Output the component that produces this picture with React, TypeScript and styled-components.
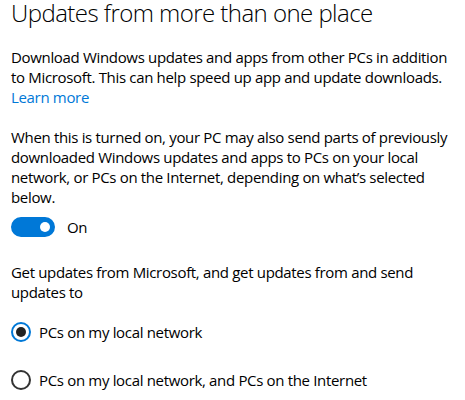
import * as React from "react";
import styled, { createGlobalStyle } from "styled-components";

const GlobalStyle = createGlobalStyle`
  html, body {
    margin: 0;
    padding: 0;
    background: #ffffff;
  }
`;

const Page = styled.div`
  padding: 0 11px;
  font-family: "Open Sans", "Noto Sans", sans-serif;
  color: #000000;
  font-size: 15px;
  line-height: 20px;
  letter-spacing: -0.33px;
`;

const Title = styled.h1`
  margin: 0;
  font-size: 24px;
  font-weight: 300;
  line-height: 26px;
  letter-spacing: -0.55px;
  color: #000000;
`;

const Paragraph = styled.p<{ $top: number }>`
  margin: ${(p) => p.$top}px 0 0;
`;

const Link = styled.a`
  color: #0078d7;
  text-decoration: none;
`;

const ToggleRow = styled.div`
  display: flex;
  align-items: center;
  gap: 12px;
  margin-top: 10px;
`;

const Track = styled.div<{ $on: boolean }>`
  width: 44px;
  height: 20px;
  border-radius: 10px;
  box-sizing: border-box;
  background: ${(p) => (p.$on ? "#0078d7" : "transparent")};
  border: 2px solid ${(p) => (p.$on ? "#0078d7" : "#333333")};
  display: flex;
  align-items: center;
  justify-content: ${(p) => (p.$on ? "flex-end" : "flex-start")};
  padding: 0 3px;
`;

const Knob = styled.div<{ $on: boolean }>`
  width: 10px;
  height: 10px;
  border-radius: 50%;
  background: ${(p) => (p.$on ? "#ffffff" : "#333333")};
`;

const RadioList = styled.div`
  display: flex;
  flex-direction: column;
  gap: 28px;
  margin-top: 20px;
`;

const RadioRow = styled.label`
  display: flex;
  align-items: center;
  gap: 8px;
  height: 20px;
`;

const RadioCircle = styled.span<{ $checked: boolean }>`
  width: 20px;
  height: 20px;
  box-sizing: border-box;
  border-radius: 50%;
  border: 2px solid ${(p) => (p.$checked ? "#0078d7" : "#333333")};
  display: flex;
  align-items: center;
  justify-content: center;
  flex-shrink: 0;
`;

const RadioDot = styled.span`
  width: 10px;
  height: 10px;
  border-radius: 50%;
  background: #222222;
`;

const options = [
  "PCs on my local network",
  "PCs on my local network, and PCs on the Internet",
];

export default function App() {
  const [selected, setSelected] = React.useState(0);
  const [on, setOn] = React.useState(true);

  return (
    <>
      <GlobalStyle />
      <Page>
        <Title>Updates from more than one place</Title>
        <Paragraph $top={21}>
          Download Windows updates and apps from other PCs in addition to
          Microsoft. This can help speed up app and update downloads.
          <br />
          <Link href="#">Learn more</Link>
        </Paragraph>
        <Paragraph $top={20}>
          When this is turned on, your PC may also send parts of previously
          downloaded Windows updates and apps to PCs on your local network, or
          PCs on the Internet, depending on what’s selected below.
        </Paragraph>
        <ToggleRow onClick={() => setOn(!on)}>
          <Track $on={on}>
            <Knob $on={on} />
          </Track>
          <span>{on ? "On" : "Off"}</span>
        </ToggleRow>
        <Paragraph $top={25}>
          Get updates from Microsoft, and get updates from and send updates to
        </Paragraph>
        <RadioList>
          {options.map((label, i) => (
            <RadioRow key={label} onClick={() => setSelected(i)}>
              <RadioCircle $checked={selected === i}>
                {selected === i && <RadioDot />}
              </RadioCircle>
              <span>{label}</span>
            </RadioRow>
          ))}
        </RadioList>
      </Page>
    </>
  );
}
